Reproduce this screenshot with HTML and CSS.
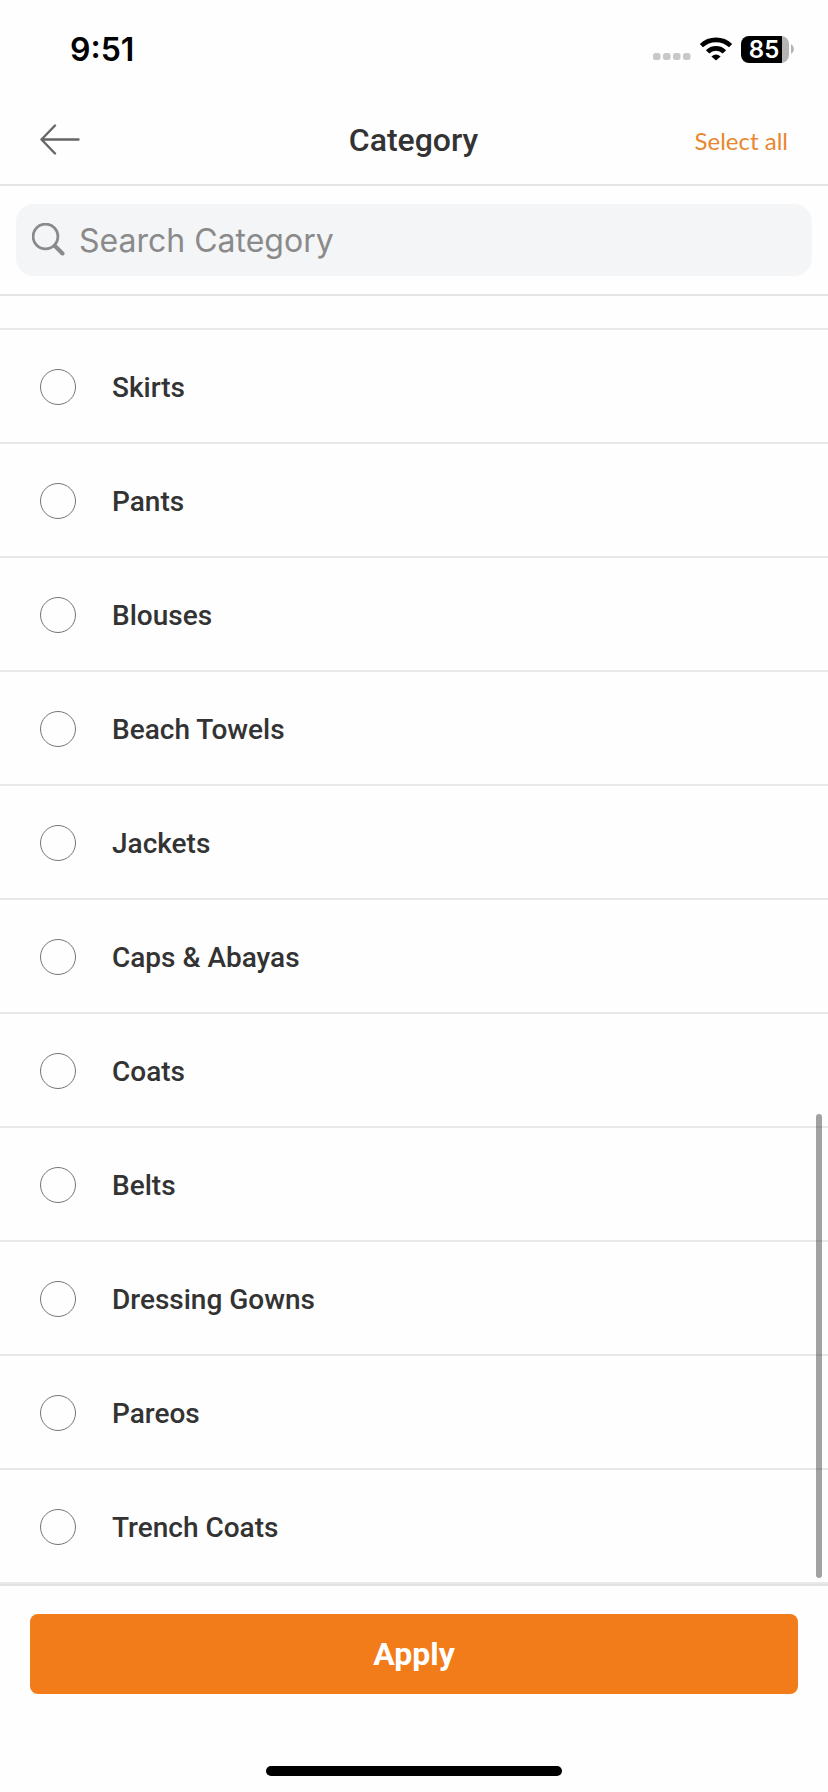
FILE: index.html
```html
<!DOCTYPE html>
<html lang="en">
<head>
    <meta charset="UTF-8">
    <meta name="viewport" content="width=device-width, initial-scale=1.0">
    <title>Category</title>
    <link rel="stylesheet" href="styles.css">
</head>
<body>
    <div class="status-bar">
        <span class="time">9:51</span>
        <div class="status-icons">
            <svg class="signal" width="38" height="8" viewBox="0 0 38 8" fill="#c8c8c8">
                <rect x="0" y="0" width="7.5" height="7" rx="2.5"/>
                <rect x="10" y="0" width="7.5" height="7" rx="2.5"/>
                <rect x="20" y="0" width="7.5" height="7" rx="2.5"/>
                <rect x="30" y="0" width="7.5" height="7" rx="2.5"/>
            </svg>
            <svg class="wifi" width="34" height="24" viewBox="0 0 34 24">
                <g fill="none" stroke="#000" stroke-width="4.6">
                    <path d="M2.4 8.6C10.4 .9 23.6 .9 31.6 8.6"/>
                    <path d="M8.6 14.9C13 10.2 21 10.2 25.4 14.9"/>
                </g>
                <path d="M17 23.6L12.4 19.4Q17 15.8 21.6 19.4Z"/>
            </svg>
            <div class="battery">
                <span class="battery-level">85</span>
            </div>
            <svg class="battery-cap" width="4" height="10" viewBox="0 0 4 10"><path d="M0 0Q3 2 3 5T0 10Z" fill="#b4b4b4"/></svg>
        </div>
    </div>

    <header class="header">
        <button class="back-btn" aria-label="Back">
            <svg width="42" height="32" viewBox="0 0 42 32" fill="none" stroke="#666" stroke-width="2.4" stroke-linecap="round" stroke-linejoin="round">
                <path d="M39.5 15.5H2.5M16 1.5L2.5 15.5L16 29.5"/>
            </svg>
        </button>
        <h1>Category</h1>
        <button class="select-all">Select all</button>
    </header>

    <div class="search">
        <label class="search-box">
            <svg width="34" height="34" viewBox="0 0 34 34" fill="none" stroke="#8a8a8a" stroke-linecap="round">
                <circle cx="13.5" cy="13.5" r="12.4" stroke-width="2.8"/>
                <path d="M23 23L30.5 30.5" stroke-width="4"/>
            </svg>
            <input type="text" placeholder="Search Category" aria-label="Search Category">
        </label>
    </div>

    <main class="list">
        <ul>
            <li><label><input type="checkbox"><span>Skirts</span></label></li>
            <li><label><input type="checkbox"><span>Pants</span></label></li>
            <li><label><input type="checkbox"><span>Blouses</span></label></li>
            <li><label><input type="checkbox"><span>Beach Towels</span></label></li>
            <li><label><input type="checkbox"><span>Jackets</span></label></li>
            <li><label><input type="checkbox"><span>Caps &amp; Abayas</span></label></li>
            <li><label><input type="checkbox"><span>Coats</span></label></li>
            <li><label><input type="checkbox"><span>Belts</span></label></li>
            <li><label><input type="checkbox"><span>Dressing Gowns</span></label></li>
            <li><label><input type="checkbox"><span>Pareos</span></label></li>
            <li><label><input type="checkbox"><span>Trench Coats</span></label></li>
        </ul>
        <div class="scrollbar"></div>
    </main>

    <footer class="footer">
        <button class="apply-btn">Apply</button>
        <div class="home-indicator"></div>
    </footer>
</body>
</html>
```

FILE: styles.css
```css
* {
    box-sizing: border-box;
}
body {
    margin: 0;
    min-height: 100vh;
    display: flex;
    flex-direction: column;
    font-family: Roboto, sans-serif;
    color: #333;
    background-color: #fefefe;
}
button {
    font-family: inherit;
    border: none;
    background: none;
    padding: 0;
    cursor: pointer;
}

/* Status bar */
.status-bar {
    display: flex;
    align-items: center;
    justify-content: space-between;
    height: 98px;
    padding: 0 33px 0 70px;
    font-family: Inter, sans-serif;
    font-weight: 600;
    color: #000;
}
.time {
    font-size: 32px;
}
.status-icons {
    display: flex;
    align-items: center;
}
.signal {
    margin: 16px 8px 0 0;
}
.wifi {
    margin-right: 8px;
}
.battery {
    width: 48px;
    height: 27px;
    border-radius: 8px;
    background: linear-gradient(to right, #000 41px, #b4b4b4 41px);
}
.battery-level {
    display: block;
    padding-right: 2px;
    font-size: 24px;
    font-weight: 600;
    line-height: 27px;
    text-align: center;
    color: #fff;
}
.battery-cap {
    margin-left: 2px;
}

/* Header */
.header {
    display: grid;
    grid-template-columns: 1fr auto 1fr;
    align-items: center;
    height: 88px;
    padding: 0 40px 2px 39px;
    border-bottom: 2px solid #e5e5e5;
}
.header h1 {
    margin: 0;
    font-size: 32px;
    font-weight: 500;
}
.back-btn {
    justify-self: start;
    display: flex;
}
.select-all {
    justify-self: end;
    font-family: Lato, sans-serif;
    font-size: 24px;
    color: #e8872f;
}

/* Search */
.search {
    padding: 18px 16px;
    border-bottom: 2px solid #e5e5e5;
}
.search-box {
    display: flex;
    align-items: center;
    gap: 13px;
    height: 72px;
    padding: 0 16px;
    border-radius: 18px;
    background-color: #f4f5f7;
}
.search-box input {
    flex: 1;
    min-width: 0;
    padding: 0;
    border: none;
    outline: none;
    background: none;
    font-family: Inter, sans-serif;
    font-size: 32px;
    color: #333;
}
.search-box input::placeholder {
    color: #8a8a8a;
}

/* Category list */
.list {
    position: relative;
    flex: 1;
    padding-top: 32px;
}
.list ul {
    margin: 0;
    padding: 0;
    list-style: none;
    border-top: 2px solid #e9e9e9;
}
.list li {
    border-bottom: 2px solid #e9e9e9;
}
.list label {
    display: flex;
    align-items: center;
    gap: 36px;
    height: 112px;
    padding: 2px 40px 0;
    font-size: 28px;
    font-weight: 500;
    cursor: pointer;
}
.list input {
    appearance: none;
    width: 36px;
    height: 36px;
    margin: 0;
    border: 1px solid #757575;
    border-radius: 50%;
}
.list input:checked {
    border: 10px solid #f27b1a;
}
.scrollbar {
    position: absolute;
    right: 6px;
    bottom: 6px;
    width: 6px;
    height: 36%;
    border-radius: 3px;
    background-color: rgba(0, 0, 0, 0.36);
}

/* Footer */
.footer {
    padding: 28px 30px 16px;
    border-top: 2px solid #e2e2e2;
}
.apply-btn {
    display: block;
    width: 100%;
    height: 80px;
    border-radius: 8px;
    background-color: #f27b1a;
    color: #fff;
    font-size: 32px;
    font-weight: 700;
}
.home-indicator {
    width: 296px;
    height: 10px;
    margin: 72px auto 0;
    border-radius: 5px;
    background-color: #000;
}
```
